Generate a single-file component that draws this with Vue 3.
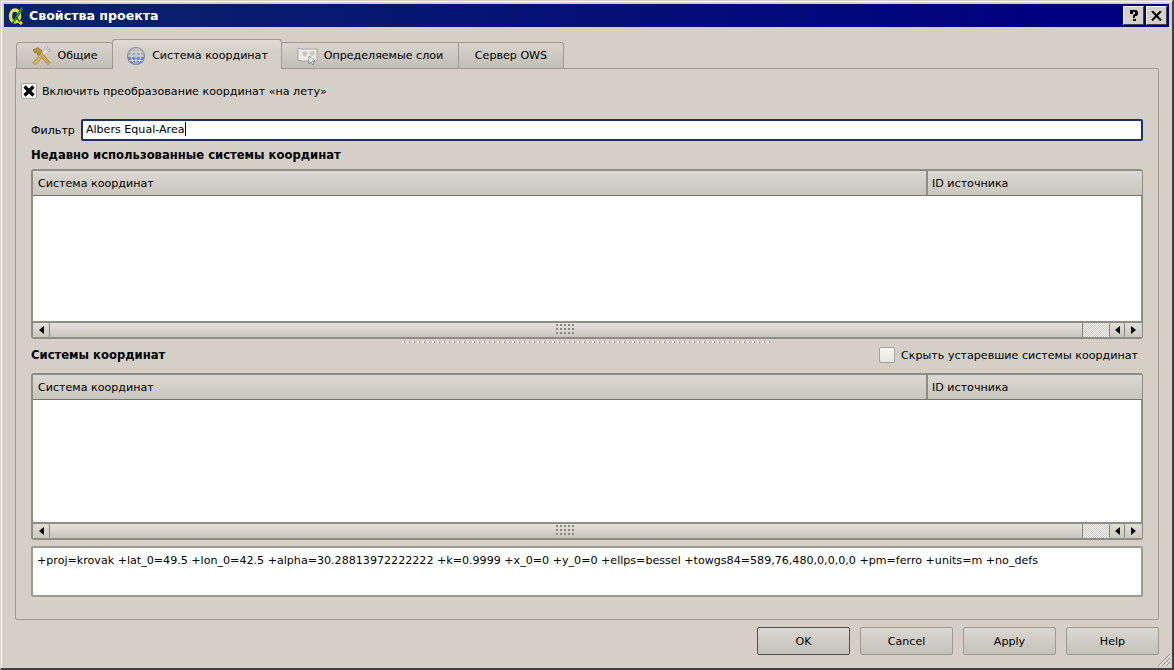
<script setup>
const tabs = [
  { label: 'Общие', icon: 'tools', cls: 'tab-a' },
  { label: 'Система координат', icon: 'globe', cls: 'tab-b active' },
  { label: 'Определяемые слои', icon: 'map', cls: 'tab-c' },
  { label: 'Сервер OWS', icon: '', cls: 'tab-d' }
]
const buttons = ['OK', 'Cancel', 'Apply', 'Help']
const proj = '+proj=krovak +lat_0=49.5 +lon_0=42.5 +alpha=30.28813972222222 +k=0.9999 +x_0=0 +y_0=0 +ellps=bessel +towgs84=589,76,480,0,0,0,0 +pm=ferro +units=m +no_defs'
</script>

<template>
  <div class="window">
    <div class="titlebar">
      <svg class="logo" width="18" height="19" viewBox="0 0 18 19">
        <ellipse cx="8" cy="10" rx="4.5" ry="6" fill="none" stroke="#e8e23a" stroke-width="3.4" />
        <path d="M9 13 L15 18" stroke="#e8e23a" stroke-width="3" />
        <path d="M4 17 C8 14 9 8 14 2 L16 1 L15 5 C12 9 11 13 7 17 Z" fill="#2f8a2a" />
        <path d="M9 11 L13 16" stroke="#1c6a1c" stroke-width="1.6" />
      </svg>
      <span class="title">Свойства проекта</span>
      <div class="capbtns">
        <div class="capbtn">
          <svg width="12" height="13" viewBox="0 0 12 13"><path d="M2 1h7v1h1v4H9v1H7v2H5V6h1V5h1V3H5v2H2V2z M5 10h3v2H5z" fill="#000" /></svg>
        </div>
        <div class="capbtn">
          <svg width="11" height="10" viewBox="0 0 11 10"><path d="M1 0 L10 9.5 M10 0 L1 9.5" stroke="#000" stroke-width="2" /></svg>
        </div>
      </div>
    </div>

    <div class="body">
      <div class="tabbar">
        <div v-for="t in tabs" :key="t.label" class="tab" :class="t.cls">
          <svg v-if="t.icon === 'tools'" class="ticon" width="20" height="20" viewBox="0 0 20 20">
            <path d="M2 16.5 L4 18.5 L17 5.5 L19 5.5 L18.5 2.5 L16.5 4.5 L15 3 L17 1 L14 1 L13.5 4 Z" fill="#eceae4" stroke="#96948e" stroke-width=".6" />
            <path d="M2 16.5 L4 18.5 L10 12.5 L8 10.5 Z" fill="#e0b84c" stroke="#94701f" stroke-width=".6" />
            <path d="M7 7.5 L17 18.5 L19 16.5 L9.5 5.5 Z" fill="#dcae42" stroke="#8a651c" stroke-width=".6" />
            <path d="M2 4 L7 1.5 L11 5 L7 9.5 L6 7 L3.5 6.5 Z" fill="#bf9236" stroke="#7a5a1c" stroke-width=".6" />
          </svg>
          <svg v-else-if="t.icon === 'globe'" class="ticon" width="20" height="20" viewBox="0 0 20 20">
            <path d="M1.5 10.5 A8.5 8.5 0 0 0 18.5 10.5 Z" fill="#5d93cc" />
            <path d="M1.5 10.5 A8.5 8.5 0 0 1 18.5 10.5 Z" fill="#a9abb0" />
            <g fill="none" stroke="#e6e8ec" stroke-width=".8">
              <ellipse cx="10" cy="10" rx="4.5" ry="8.5" />
              <path d="M10 1.5 V18.5 M2 6 H18 M1.5 10 H18.5 M3 14.5 H17" />
            </g>
            <circle cx="10" cy="10" r="8.5" fill="none" stroke="#75797f" stroke-width=".8" />
          </svg>
          <svg v-else-if="t.icon === 'map'" class="ticon" width="21" height="18" viewBox="0 0 21 18">
            <path d="M1 1 L4 2 H20 V14 H4 L1 13 Z" fill="#eeedea" stroke="#a8a7a3" />
            <path d="M5 5 L9 4 L11 7 L8 10 L6 9 Z M12 5 L17 4 L18 8 L14 9 Z" fill="#c8c8c4" />
            <path d="M12 9 L12 17 L14 15 L16 18 L17 17 L15.5 14.5 L18 14 Z" fill="#fff" stroke="#666" stroke-width=".7" />
          </svg>
          <span>{{ t.label }}</span>
        </div>
      </div>

      <div class="pane">
        <label class="enable">
          <span class="check checked">
            <svg width="12" height="12" viewBox="0 0 12 12"><path d="M1.5 1.5 L10.5 10.5 M10.5 1.5 L1.5 10.5" stroke="#000" stroke-width="3.2" /></svg>
          </span>
          <span>Включить преобразование координат «на лету»</span>
        </label>

        <div class="filter">
          <span>Фильтр</span>
          <div class="input">Albers Equal-Area<i class="caret"></i></div>
        </div>

        <div class="heading recent-h">Недавно использованные системы координат</div>

        <div class="table t1">
          <div class="thead"><div class="th c1">Система координат</div><div class="th c2">ID источника</div></div>
          <div class="tbody"></div>
          <div class="hscroll">
            <div class="arrow"><svg width="5" height="8" viewBox="0 0 5 8"><path d="M5 0V8L0 4Z" /></svg></div>
            <div class="handle"><div class="grip"></div></div>
            <div class="groove"></div>
            <div class="arrow"><svg width="5" height="8" viewBox="0 0 5 8"><path d="M5 0V8L0 4Z" /></svg></div>
            <div class="arrow"><svg width="5" height="8" viewBox="0 0 5 8"><path d="M0 0V8L5 4Z" /></svg></div>
          </div>
        </div>

        <div class="splitter"><div class="dots"></div></div>

        <div class="section">
          <span class="heading">Системы координат</span>
          <label class="hide"><span class="check plain"></span><span>Скрыть устаревшие системы координат</span></label>
        </div>

        <div class="table t2">
          <div class="thead"><div class="th c1">Система координат</div><div class="th c2">ID источника</div></div>
          <div class="tbody"></div>
          <div class="hscroll">
            <div class="arrow"><svg width="5" height="8" viewBox="0 0 5 8"><path d="M5 0V8L0 4Z" /></svg></div>
            <div class="handle"><div class="grip"></div></div>
            <div class="groove"></div>
            <div class="arrow"><svg width="5" height="8" viewBox="0 0 5 8"><path d="M5 0V8L0 4Z" /></svg></div>
            <div class="arrow"><svg width="5" height="8" viewBox="0 0 5 8"><path d="M0 0V8L5 4Z" /></svg></div>
          </div>
        </div>

        <div class="projbox">{{ proj }}</div>
      </div>

      <div class="buttons">
        <div v-for="(b, i) in buttons" :key="b" class="btn" :class="{ def: i === 0 }">{{ b }}</div>
      </div>
    </div>

    <svg class="sizegrip" width="14" height="14" viewBox="0 0 14 14">
      <path d="M13 1 L1 13 M13 5 L5 13 M13 9 L9 13" stroke="#8f8c85" stroke-width="1" fill="none" />
      <path d="M13 2.5 L2.5 13 M13 6.5 L6.5 13 M13 10.5 L10.5 13" stroke="#f4f2ee" stroke-width="1" fill="none" />
    </svg>
  </div>
</template>

<style scoped>
.window {
  position: relative;
  box-sizing: border-box;
  width: 1174px;
  height: 670px;
  padding: 4px 4px 2px;
  background: #d4d0c8;
  border-top: 1px solid #d4d0c8;
  border-left: 1px solid #d4d0c8;
  border-right: 2px solid #404040;
  border-bottom: 2px solid #404040;
  box-shadow: inset 1px 1px 0 #fff;
  font-family: "DejaVu Sans", sans-serif;
  font-size: 11.1px;
  color: #000;
  overflow: hidden;
  display: flex;
  flex-direction: column;
}
.titlebar {
  flex: none;
  height: 23px;
  margin: -1px -1px 0 -1px;
  background: linear-gradient(90deg, #0a246a, #000080 90%);
  display: flex;
  align-items: center;
  padding-left: 3px;
  color: #fff;
}
.logo { flex: none; margin-right: 4px; }
.title { font-weight: bold; font-size: 12.6px; }
.capbtns { margin-left: auto; margin-right: 2px; display: flex; gap: 2px; }
.capbtn {
  box-sizing: border-box;
  width: 21px;
  height: 19px;
  background: #d4d0c8;
  border: 1px solid;
  border-color: #fff #404040 #404040 #fff;
  display: flex;
  align-items: center;
  justify-content: center;
}
.body {
  flex: 1;
  min-height: 0;
  padding: 12px 9px 0 10px;
  display: flex;
  flex-direction: column;
}
.tabbar {
  flex: none;
  height: 30px;
  padding-left: 1px;
  display: flex;
  align-items: flex-end;
  margin-bottom: -1px;
  position: relative;
  z-index: 1;
}
.tab {
  box-sizing: border-box;
  height: 27px;
  display: flex;
  align-items: center;
  justify-content: center;
  gap: 6px;
  border: 1px solid #9c9a93;
  border-left-width: 0;
  border-radius: 0 3px 0 0;
  background: linear-gradient(#d9d5ce, #c1beb6);
}
.tab-a { width: 97px; border-left-width: 1px; border-radius: 3px 3px 0 0; }
.tab-b { width: 170px; }
.tab-c { width: 177px; border-radius: 0; border-left-width: 0; }
.tab-d { width: 105px; }
.tab.active {
  height: 30px;
  border-left-width: 1px;
  border-bottom: 0;
  border-radius: 3px 3px 0 0;
  background: linear-gradient(#dedbd4, #d4d0c8 40%);
  margin-left: -1px;
  padding-top: 2px;
}
.ticon { flex: none; }
.pane {
  box-sizing: border-box;
  height: 552px;
  flex: none;
  border: 1px solid #9c9a93;
  border-radius: 0 2px 2px 2px;
  padding: 0 15px 0 15px;
  display: flex;
  flex-direction: column;
}
.enable {
  display: flex;
  align-items: center;
  height: 16px;
  gap: 5px;
  margin: 14px 0 0 -10px;
}
.check {
  box-sizing: border-box;
  flex: none;
  width: 16px;
  height: 16px;
  background: #fff;
  border: 1px solid #a6a39c;
  border-radius: 2px;
  display: flex;
  align-items: center;
  justify-content: center;
}
.check.plain { background: linear-gradient(#f8f7f5, #e7e5e0); }
.filter {
  display: flex;
  align-items: center;
  gap: 6px;
  margin-top: 20px;
  height: 22px;
}
.input {
  box-sizing: border-box;
  flex: 1;
  height: 22px;
  line-height: 18px;
  background: #fff;
  border: 2px solid #1f2f68;
  border-radius: 2px;
  padding-left: 3px;
}
.caret {
  display: inline-block;
  width: 1px;
  height: 14px;
  background: #000;
  vertical-align: -3px;
}
.heading { font-weight: bold; font-size: 11.6px; }
.recent-h { margin-top: 6px; height: 16px; line-height: 16px; }
.table {
  box-sizing: border-box;
  flex: none;
  margin-top: 6px;
  border: 2px solid #8e8c85;
  border-right-width: 1px;
  border-radius: 3px;
  background: #fff;
  display: flex;
  flex-direction: column;
  overflow: hidden;
}
.t1 { height: 170px; }
.t2 { height: 167px; margin-top: 10px; }
.thead {
  flex: none;
  height: 24px;
  display: flex;
  background: linear-gradient(#dcd9d2, #c8c5bd);
  border-bottom: 1px solid #75736c;
  box-sizing: content-box;
}
.th { display: flex; align-items: center; padding-left: 5px; box-sizing: border-box; }
.c1 { flex: none; width: 895px; border-right: 2px solid #8e8c85; }
.c2 { flex: 1; padding-left: 4px; }
.tbody { flex: 1; background: #fff; border-right: 1px solid #8e8c85; }
.hscroll {
  box-sizing: border-box;
  flex: none;
  height: 16px;
  display: flex;
  background: #d4d0c8;
  border-top: 2px solid #8e8c85;
  padding: 0 1px 0 1px;
}
.arrow {
  box-sizing: border-box;
  flex: none;
  width: 16px;
  display: flex;
  align-items: center;
  justify-content: center;
  background: linear-gradient(#e3dfd9, #cbc8c0);
  border: 1px solid #85837c;
  border-width: 0 1px 0 0;
  border-radius: 2px;
}
.groove + .arrow { border-left-width: 1px; }
.arrow:last-child { border-right: 0; }
.handle {
  flex: none;
  width: 1033px;
  background: linear-gradient(#e6e2dc, #c9c6be);
  border-right: 1px solid #85837c;
  box-sizing: border-box;
  display: flex;
  align-items: center;
  justify-content: center;
}
.grip {
  width: 20px;
  height: 12px;
  background: radial-gradient(circle at 1px 1px, #8a8880 1px, transparent 1.2px) 0 0 / 4px 4px;
}
.groove {
  flex: 1;
  background: repeating-conic-gradient(#c9c7c1 0 25%, #f8f7f5 0 50%) 0 0 / 2px 2px;
}
.splitter {
  flex: none;
  height: 6px;
  display: flex;
  justify-content: center;
  align-items: center;
  margin-left: -1px;
}
.dots {
  width: 370px;
  height: 2px;
  background: linear-gradient(90deg, #f4f2ee 2px, #9f9c95 2px, #9f9c95 3px, transparent 3px) 0 0 / 5px 2px;
}
.section {
  display: flex;
  align-items: center;
  justify-content: space-between;
  height: 16px;
  margin-top: 2px;
  padding-right: 5px;
}
.hide { display: flex; align-items: center; gap: 6px; }
.projbox {
  box-sizing: border-box;
  flex: none;
  height: 51px;
  margin-top: 6px;
  background: #fff;
  border: 2px solid #9c9a93;
  border-radius: 2px;
  padding: 6px 0 0 4px;
  white-space: nowrap;
}
.buttons {
  flex: none;
  display: flex;
  justify-content: flex-end;
  gap: 10px;
  margin-top: 7px;
}
.btn {
  box-sizing: border-box;
  width: 93px;
  height: 28px;
  display: flex;
  align-items: center;
  justify-content: center;
  background: linear-gradient(#dbd8d1, #c4c1b9);
  border: 1px solid #9c9a93;
  border-radius: 2px;
}
.btn.def { border-color: #55534e; }
.sizegrip { position: absolute; right: 1px; bottom: 1px; }
</style>
